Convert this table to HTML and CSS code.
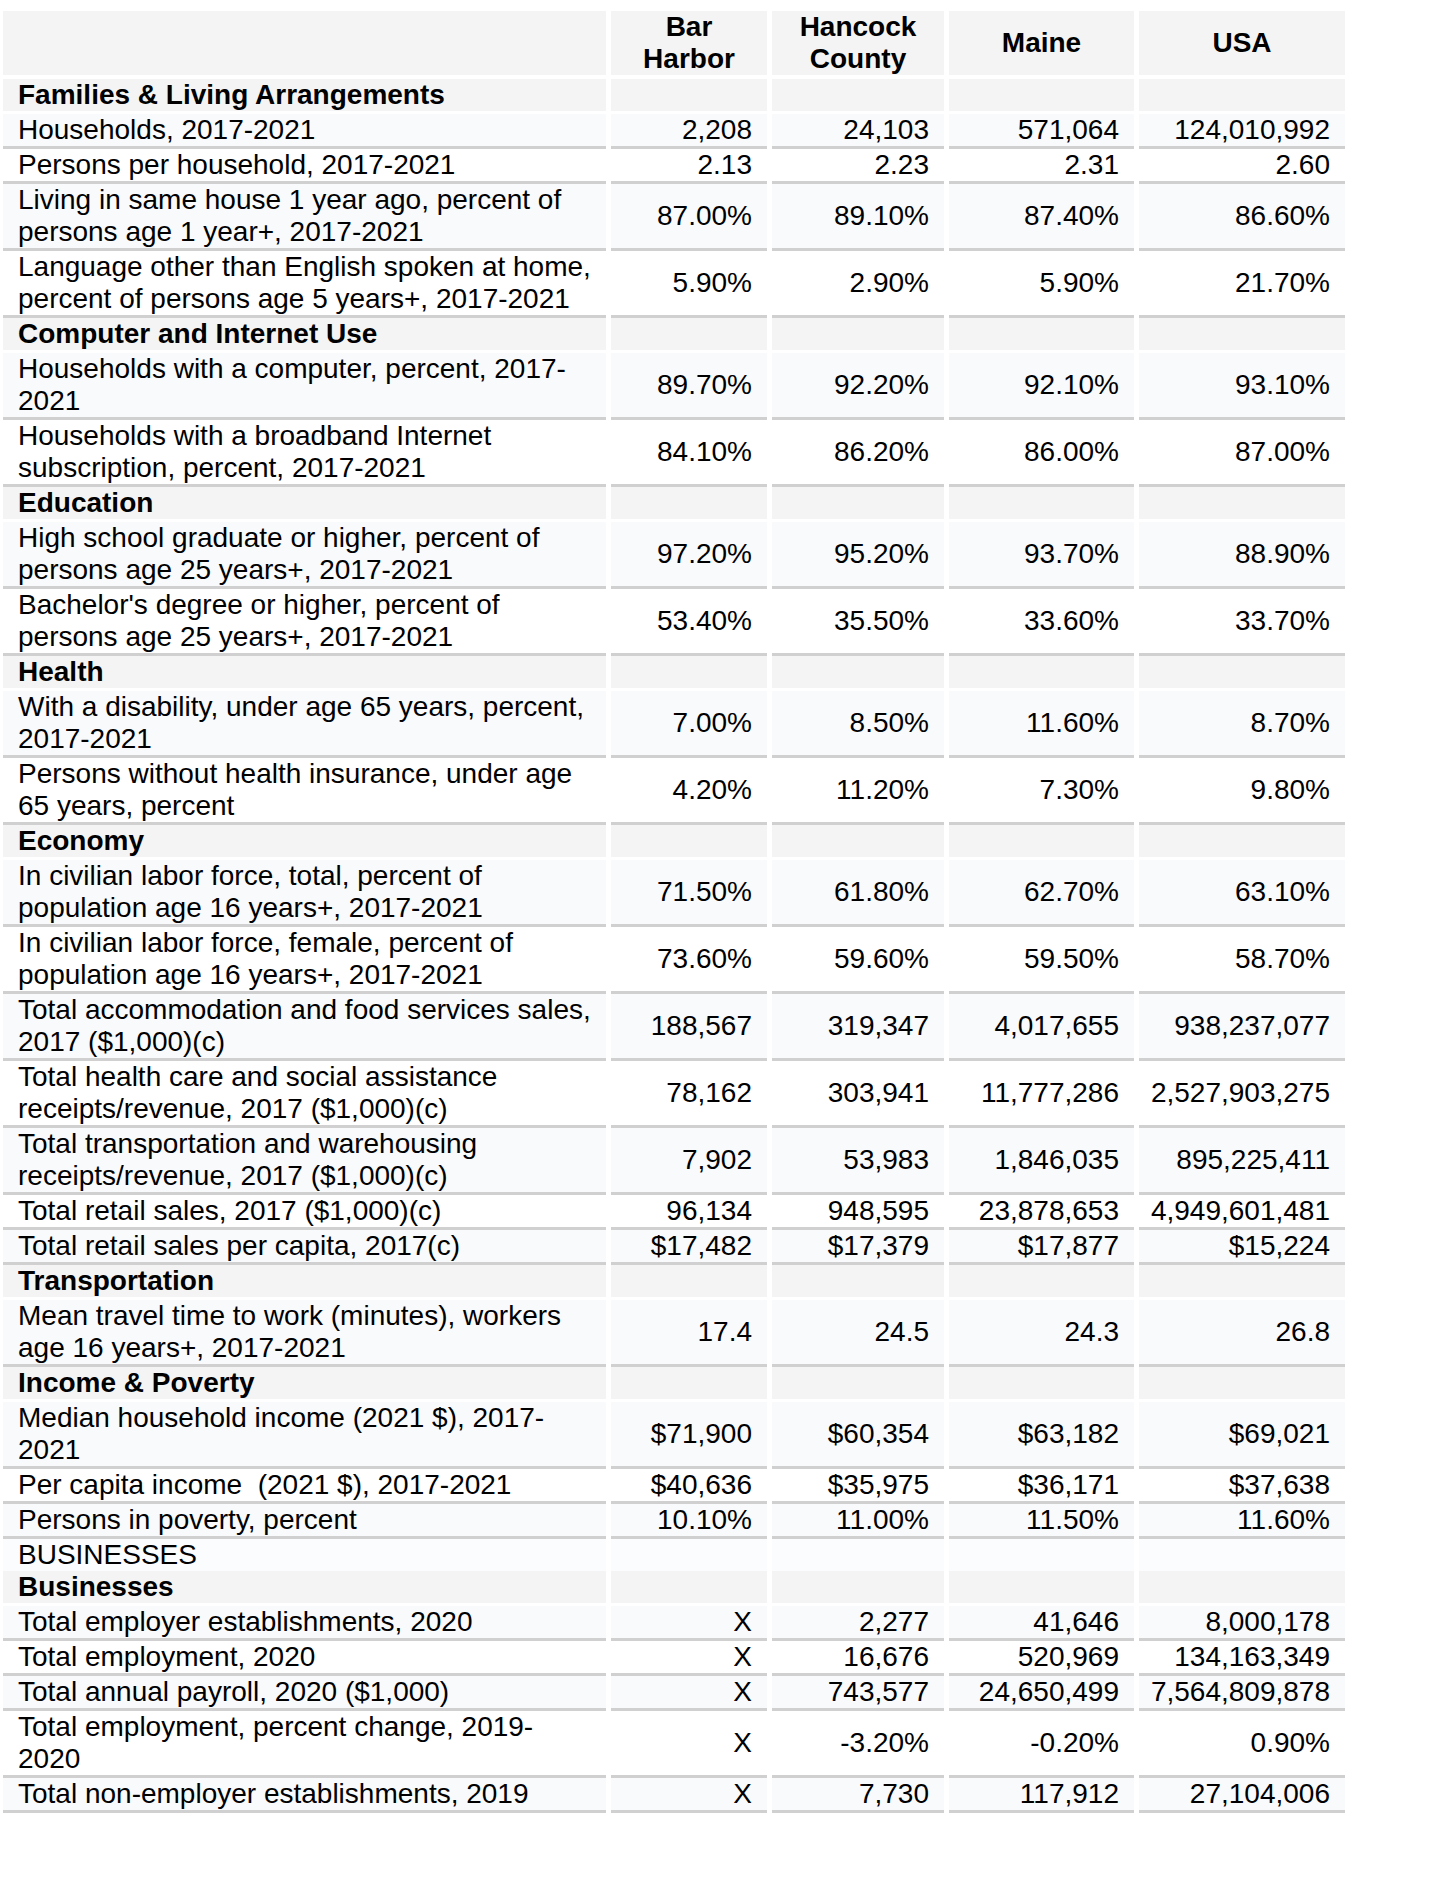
FILE: index.html
```html
<!DOCTYPE html>
<html lang="en">
<head>
<meta charset="utf-8">
<title>Bar Harbor QuickFacts</title>
<link rel="stylesheet" href="styles.css">
</head>
<body>
<div class="facts">
  <div class="row head">
    <div class="cell"></div>
    <div class="cell">Bar<br>Harbor</div>
    <div class="cell">Hancock<br>County</div>
    <div class="cell">Maine</div>
    <div class="cell">USA</div>
  </div>

  <div class="row section"><div class="cell label">Families &amp; Living Arrangements</div><div class="cell"></div><div class="cell"></div><div class="cell"></div><div class="cell"></div></div>
  <div class="row data alt"><div class="cell label">Households, 2017-2021</div><div class="cell val">2,208</div><div class="cell val">24,103</div><div class="cell val">571,064</div><div class="cell val">124,010,992</div></div>
  <div class="row data"><div class="cell label">Persons per household, 2017-2021</div><div class="cell val">2.13</div><div class="cell val">2.23</div><div class="cell val">2.31</div><div class="cell val">2.60</div></div>
  <div class="row data alt"><div class="cell label">Living in same house 1 year ago, percent of<br>persons age 1 year+, 2017-2021</div><div class="cell val">87.00%</div><div class="cell val">89.10%</div><div class="cell val">87.40%</div><div class="cell val">86.60%</div></div>
  <div class="row data"><div class="cell label">Language other than English spoken at home,<br>percent of persons age 5 years+, 2017-2021</div><div class="cell val">5.90%</div><div class="cell val">2.90%</div><div class="cell val">5.90%</div><div class="cell val">21.70%</div></div>

  <div class="row section"><div class="cell label">Computer and Internet Use</div><div class="cell"></div><div class="cell"></div><div class="cell"></div><div class="cell"></div></div>
  <div class="row data alt"><div class="cell label">Households with a computer, percent, 2017-<br>2021</div><div class="cell val">89.70%</div><div class="cell val">92.20%</div><div class="cell val">92.10%</div><div class="cell val">93.10%</div></div>
  <div class="row data"><div class="cell label">Households with a broadband Internet<br>subscription, percent, 2017-2021</div><div class="cell val">84.10%</div><div class="cell val">86.20%</div><div class="cell val">86.00%</div><div class="cell val">87.00%</div></div>

  <div class="row section"><div class="cell label">Education</div><div class="cell"></div><div class="cell"></div><div class="cell"></div><div class="cell"></div></div>
  <div class="row data alt"><div class="cell label">High school graduate or higher, percent of<br>persons age 25 years+, 2017-2021</div><div class="cell val">97.20%</div><div class="cell val">95.20%</div><div class="cell val">93.70%</div><div class="cell val">88.90%</div></div>
  <div class="row data"><div class="cell label">Bachelor's degree or higher, percent of<br>persons age 25 years+, 2017-2021</div><div class="cell val">53.40%</div><div class="cell val">35.50%</div><div class="cell val">33.60%</div><div class="cell val">33.70%</div></div>

  <div class="row section"><div class="cell label">Health</div><div class="cell"></div><div class="cell"></div><div class="cell"></div><div class="cell"></div></div>
  <div class="row data alt"><div class="cell label">With a disability, under age 65 years, percent,<br>2017-2021</div><div class="cell val">7.00%</div><div class="cell val">8.50%</div><div class="cell val">11.60%</div><div class="cell val">8.70%</div></div>
  <div class="row data"><div class="cell label">Persons without health insurance, under age<br>65 years, percent</div><div class="cell val">4.20%</div><div class="cell val">11.20%</div><div class="cell val">7.30%</div><div class="cell val">9.80%</div></div>

  <div class="row section"><div class="cell label">Economy</div><div class="cell"></div><div class="cell"></div><div class="cell"></div><div class="cell"></div></div>
  <div class="row data alt"><div class="cell label">In civilian labor force, total, percent of<br>population age 16 years+, 2017-2021</div><div class="cell val">71.50%</div><div class="cell val">61.80%</div><div class="cell val">62.70%</div><div class="cell val">63.10%</div></div>
  <div class="row data"><div class="cell label">In civilian labor force, female, percent of<br>population age 16 years+, 2017-2021</div><div class="cell val">73.60%</div><div class="cell val">59.60%</div><div class="cell val">59.50%</div><div class="cell val">58.70%</div></div>
  <div class="row data alt"><div class="cell label">Total accommodation and food services sales,<br>2017 ($1,000)(c)</div><div class="cell val">188,567</div><div class="cell val">319,347</div><div class="cell val">4,017,655</div><div class="cell val">938,237,077</div></div>
  <div class="row data"><div class="cell label">Total health care and social assistance<br>receipts/revenue, 2017 ($1,000)(c)</div><div class="cell val">78,162</div><div class="cell val">303,941</div><div class="cell val">11,777,286</div><div class="cell val">2,527,903,275</div></div>
  <div class="row data alt"><div class="cell label">Total transportation and warehousing<br>receipts/revenue, 2017 ($1,000)(c)</div><div class="cell val">7,902</div><div class="cell val">53,983</div><div class="cell val">1,846,035</div><div class="cell val">895,225,411</div></div>
  <div class="row data"><div class="cell label">Total retail sales, 2017 ($1,000)(c)</div><div class="cell val">96,134</div><div class="cell val">948,595</div><div class="cell val">23,878,653</div><div class="cell val">4,949,601,481</div></div>
  <div class="row data alt"><div class="cell label">Total retail sales per capita, 2017(c)</div><div class="cell val">$17,482</div><div class="cell val">$17,379</div><div class="cell val">$17,877</div><div class="cell val">$15,224</div></div>

  <div class="row section"><div class="cell label">Transportation</div><div class="cell"></div><div class="cell"></div><div class="cell"></div><div class="cell"></div></div>
  <div class="row data alt"><div class="cell label">Mean travel time to work (minutes), workers<br>age 16 years+, 2017-2021</div><div class="cell val">17.4</div><div class="cell val">24.5</div><div class="cell val">24.3</div><div class="cell val">26.8</div></div>

  <div class="row section"><div class="cell label">Income &amp; Poverty</div><div class="cell"></div><div class="cell"></div><div class="cell"></div><div class="cell"></div></div>
  <div class="row data alt"><div class="cell label">Median household income (2021 $), 2017-<br>2021</div><div class="cell val">$71,900</div><div class="cell val">$60,354</div><div class="cell val">$63,182</div><div class="cell val">$69,021</div></div>
  <div class="row data"><div class="cell label">Per capita income&nbsp; (2021 $), 2017-2021</div><div class="cell val">$40,636</div><div class="cell val">$35,975</div><div class="cell val">$36,171</div><div class="cell val">$37,638</div></div>
  <div class="row data alt"><div class="cell label">Persons in poverty, percent</div><div class="cell val">10.10%</div><div class="cell val">11.00%</div><div class="cell val">11.50%</div><div class="cell val">11.60%</div></div>

  <div class="row plain"><div class="cell label">BUSINESSES</div><div class="cell"></div><div class="cell"></div><div class="cell"></div><div class="cell"></div></div>

  <div class="row section"><div class="cell label">Businesses</div><div class="cell"></div><div class="cell"></div><div class="cell"></div><div class="cell"></div></div>
  <div class="row data alt"><div class="cell label">Total employer establishments, 2020</div><div class="cell val">X</div><div class="cell val">2,277</div><div class="cell val">41,646</div><div class="cell val">8,000,178</div></div>
  <div class="row data"><div class="cell label">Total employment, 2020</div><div class="cell val">X</div><div class="cell val">16,676</div><div class="cell val">520,969</div><div class="cell val">134,163,349</div></div>
  <div class="row data alt"><div class="cell label">Total annual payroll, 2020 ($1,000)</div><div class="cell val">X</div><div class="cell val">743,577</div><div class="cell val">24,650,499</div><div class="cell val">7,564,809,878</div></div>
  <div class="row data"><div class="cell label">Total employment, percent change, 2019-<br>2020</div><div class="cell val">X</div><div class="cell val">-3.20%</div><div class="cell val">-0.20%</div><div class="cell val">0.90%</div></div>
  <div class="row data alt"><div class="cell label">Total non-employer establishments, 2019</div><div class="cell val">X</div><div class="cell val">7,730</div><div class="cell val">117,912</div><div class="cell val">27,104,006</div></div>
</div>
</body>
</html>
```

FILE: styles.css
```css
html, body {
  margin: 0;
  padding: 0;
  background: #ffffff;
}

body {
  font-family: "Liberation Sans", Arial, sans-serif;
  font-size: 28px;
  line-height: 32px;
  color: #000000;
}

.facts {
  padding: 11px 0 0 3px;
  width: 1342px;
}

.row {
  display: grid;
  grid-template-columns: 603px 156px 172px 185px 206px;
  column-gap: 5px;
}

.cell {
  min-height: 32px;
}

.head {
  margin-bottom: 4px;
}

.head .cell {
  background: #f4f4f4;
  height: 64px;
  font-weight: bold;
  display: flex;
  align-items: center;
  justify-content: center;
  text-align: center;
}

.section {
  margin-bottom: 3px;
}

.section .cell {
  background: #f4f4f4;
  font-weight: bold;
}

.label {
  padding: 0 2px 0 15px;
  white-space: nowrap;
}

.data .cell {
  border-bottom: 3px solid #d0d0d0;
  background: #ffffff;
}

.data.alt .cell {
  background: #f9fafc;
}

.plain .cell {
  background: #fbfcfd;
}

.val {
  display: flex;
  align-items: center;
  justify-content: flex-end;
  padding-right: 15px;
  white-space: nowrap;
}
```
